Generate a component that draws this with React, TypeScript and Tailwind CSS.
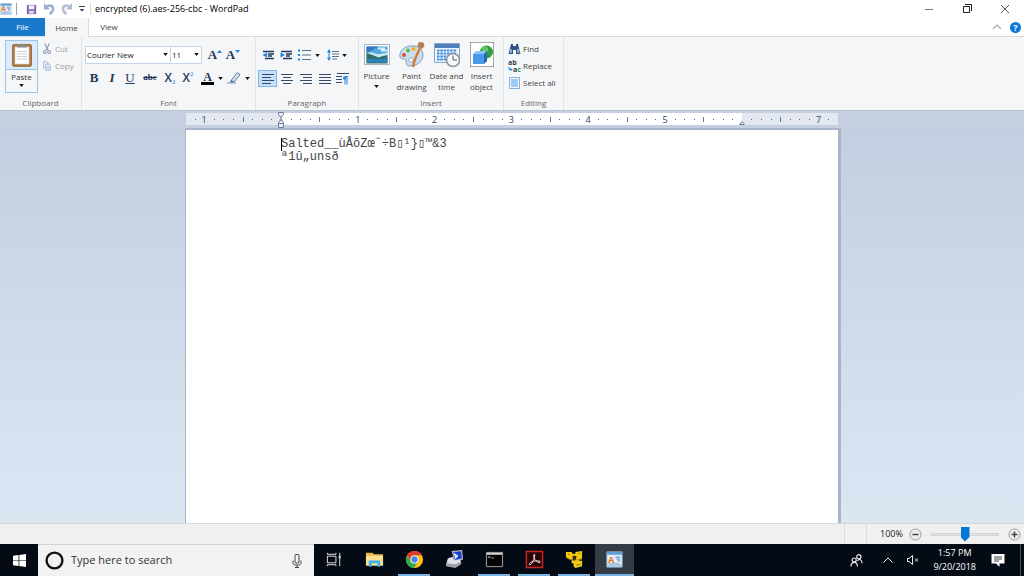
import React, { useState } from "react";
import clsx from "clsx";

const INCH = 76.8;
const PAGE_WIDTH = 652;
const MARGIN = 95;

const initialText = "Salted__ùÂõZœˆ÷B▯¹}▯™&3\nª1û„unsð";

const Caret = ({ className }: { className?: string }) => (
  <svg viewBox="0 0 6 4" className={clsx("h-[3px] w-[5px] shrink-0", className)}>
    <path d="M0 0h6L3 4z" fill="#111" />
  </svg>
);

/* ---------- Title bar ---------- */

const WordPadIcon = ({ className }: { className?: string }) => (
  <svg viewBox="0 0 18 18" className={className}>
    <path d="M1 1h16v16H1z" fill="#e4eff8" stroke="#a9c6de" />
    <path d="M1 1h16v3H1z" fill="#5d9fd6" />
    <path d="M1 14h16v3H1z" fill="#a9cbe6" />
    <text x="2" y="12.500" fontSize="10" fontWeight="700" fill="#e8762b">
      A
    </text>
    <path d="M10 6.500h5M11 8.500h4M12 10.500h3" stroke="#3f84c4" />
    <path d="M3 13.500h11" stroke="#7fa6c9" />
  </svg>
);

const TitleBar = () => (
  <header className="flex h-[18px] shrink-0 items-center bg-white">
    <WordPadIcon className="size-3" />
    <div className="ml-1 h-3 w-px bg-gray-400" />
    <div className="ml-[9px] flex items-center gap-[6px]">
      <button aria-label="Save">
        <svg viewBox="0 0 12 12" className="size-[11px]">
          <path d="M1.500 1.500h9v9h-9z" fill="#8a72bd" stroke="#6a529f" />
          <path d="M3 1.500h6v4H3z" fill="#f4f1fb" />
          <path d="M3.500 7.500h5v3h-5z" fill="#e4def2" />
        </svg>
      </button>
      <button aria-label="Undo">
        <svg viewBox="0 0 12 12" className="size-3">
          <path d="M3 4C6 1.500 10.500 2.500 10 6.500c-.3 2-1.500 3.500-3.500 4.500" fill="none" stroke="#9db1d0" strokeWidth="2.600" />
          <path d="M1 0v6.500h6z" fill="#9db1d0" />
        </svg>
      </button>
      <button aria-label="Redo">
        <svg viewBox="0 0 12 12" className="size-3">
          <path d="M9 4C6 1.500 1.500 2.500 2 6.500c.3 2 1.500 3.500 3.500 4.500" fill="none" stroke="#b4bfd0" strokeWidth="2.600" />
          <path d="M11 0v6.500H5z" fill="#b4bfd0" />
        </svg>
      </button>
      <button aria-label="Customize Quick Access Toolbar">
        <svg viewBox="0 0 6 6" className="size-[6px]">
          <path d="M0 .5h6" stroke="#444" />
          <path d="M.5 3h5L3 5.500z" fill="#444" />
        </svg>
      </button>
    </div>
    <div className="mr-1 ml-[5px] h-3 w-px bg-gray-300" />
    <h1 className="text-[9px] leading-3 text-black">encrypted (6).aes-256-cbc - WordPad</h1>
    <div className="ml-auto flex items-center gap-7 pr-[14px]">
      <button aria-label="Minimize">
        <svg viewBox="0 0 10 10" className="size-[10px]">
          <path d="M1 5.500h8" stroke="#777" />
        </svg>
      </button>
      <button aria-label="Restore">
        <svg viewBox="0 0 10 10" className="size-[10px]" fill="none" stroke="#222">
          <path d="M1.500 2.500h6v6h-6zM3 .5h6.500V7" />
        </svg>
      </button>
      <button aria-label="Close">
        <svg viewBox="0 0 10 10" className="size-[10px]">
          <path d="m1 1 8 8M9 1 1 9" stroke="#555" />
        </svg>
      </button>
    </div>
  </header>
);

const Tabs = () => (
  <nav className="flex h-[19px] shrink-0 items-stretch border-b border-[#d9dadc] bg-white text-[8px] text-[#444]">
    <button className="w-[45px] bg-[#1979ca] text-white">File</button>
    <button className="-mb-px w-11 border-r border-[#d9dadc] bg-[#f5f6f7]">Home</button>
    <button className="w-10">View</button>
    <div className="ml-auto flex items-center gap-2 pr-[3px]">
      <button aria-label="Minimize the Ribbon">
        <svg viewBox="0 0 10 6" className="h-[6px] w-[10px]">
          <path d="m1 5 4-4 4 4" fill="none" stroke="#aaa" strokeWidth="1.200" />
        </svg>
      </button>
      <button aria-label="Help" className="size-[11px] rounded-full bg-[#0c78d7] text-[9px] leading-[11px] font-bold text-white">
        ?
      </button>
    </div>
  </nav>
);

/* ---------- Ribbon ---------- */

const Group = ({ label, className, children }: { label: string; className: string; children: React.ReactNode }) => (
  <section className={clsx("flex shrink-0 flex-col border-r border-[#e2e3e5]", className)}>
    <div className="h-[59px]">{children}</div>
    <h2 className="text-center text-[8px] leading-[14px] text-[#666]">{label}</h2>
  </section>
);

const Clipboard = () => (
  <Group label="Clipboard" className="w-[82px]">
    <div className="flex gap-[5px] pt-[3px] pl-[5px]">
      <button className="flex h-[53px] w-[33px] flex-col items-center border border-[#9cc5ea] text-[8px] text-[#333]">
        <span className="flex h-[29px] w-full items-center justify-center border-b border-[#9cc5ea] bg-[#dbebfa]">
          <svg viewBox="0 0 20 24" className="h-6 w-5">
            <rect x=".7" y="1.700" width="18.600" height="21.500" rx="1" fill="#b98147" stroke="#8b5a2b" />
            <path d="M3 4h14v17H3z" fill="#fff" stroke="#c8ccd0" strokeWidth=".6" />
            <path d="M5 4.500h10V2.500h-3a2 2 0 0 0-4 0H5z" fill="#8a8f93" />
            <path d="M5 8.500h10M5 11h10M5 13.500h10M5 16h10" stroke="#b9c4d0" strokeWidth=".8" />
          </svg>
        </span>
        <span className="leading-[13px]">Paste</span>
        <Caret className="mt-px" />
      </button>
      <div className="flex flex-col text-[8px] text-[#999]">
        <button className="flex h-[17px] items-center gap-1">
          <svg viewBox="0 0 10 14" className="h-3 w-2" fill="none" stroke="#8f9fb8">
            <path d="M2 0 6.500 9M8 0 3.500 9" strokeWidth="1.500" />
            <circle cx="2.300" cy="11" r="1.700" strokeWidth="1.300" />
            <circle cx="7.700" cy="11" r="1.700" strokeWidth="1.300" />
          </svg>
          Cut
        </button>
        <button className="flex h-[18px] items-center gap-1">
          <svg viewBox="0 0 10 12" className="h-3 w-2" fill="#e5edf7" stroke="#9cb3d2">
            <path d="M.5.5h4l2 2v6h-6z" />
            <path d="M3.500 3.500h4l2 2v6h-6z" />
            <path d="M5 7h3M5 9h3" />
          </svg>
          Copy
        </button>
      </div>
    </div>
  </Group>
);

const fontButtons = "flex h-4 items-center justify-center font-['Liberation_Serif'] text-[13px] leading-4 text-[#1e395b]";

const scriptButtons = "flex h-4 w-[18px] items-center justify-center font-['Open_Sans'] text-[12px] leading-4 text-[#1e395b]";

const FontGroup = () => (
  <Group label="Font" className="w-[174px]">
    <div className="flex items-center pt-[9px] pl-[3px]">
      <div className="relative">
        <select
          aria-label="Font family"
          className="block h-[18px] w-[86px] appearance-none border border-[#c5d3e6] bg-white pl-px text-[8px] text-[#222]"
        >
          <option>Courier New</option>
          <option>Arial</option>
          <option>Calibri</option>
        </select>
        <Caret className="pointer-events-none absolute top-[7px] right-[3px]" />
      </div>
      <div className="relative -ml-px">
        <select
          aria-label="Font size"
          className="block h-[18px] w-8 appearance-none border border-[#c5d3e6] bg-white pl-px text-[8px] text-[#222]"
        >
          <option>11</option>
          <option>12</option>
          <option>14</option>
        </select>
        <Caret className="pointer-events-none absolute top-[7px] right-[3px]" />
      </div>
      <button aria-label="Grow font" className={clsx(fontButtons, "ml-1 w-[18px] font-bold")}>
        A
        <svg viewBox="0 0 5 3" className="mb-2 h-[3px] w-[5px]">
          <path d="M0 3h5L2.500 0z" fill="#1b84e0" />
        </svg>
      </button>
      <button aria-label="Shrink font" className={clsx(fontButtons, "w-[18px] font-bold")}>
        A
        <svg viewBox="0 0 5 3" className="mb-2 h-[3px] w-[5px]">
          <path d="M0 0h5L2.500 3z" fill="#1b84e0" />
        </svg>
      </button>
    </div>
    <div className="flex items-center pt-[6px] pl-[3px]">
      <button aria-label="Bold" className={clsx(fontButtons, "w-[18px] font-bold")}>
        B
      </button>
      <button aria-label="Italic" className={clsx(fontButtons, "w-[18px] font-bold italic")}>
        I
      </button>
      <button aria-label="Underline" className={clsx(fontButtons, "w-[18px] underline")}>
        U
      </button>
      <button aria-label="Strikethrough" className="flex h-4 w-[22px] items-center justify-center font-['Liberation_Serif'] text-[9px] font-bold text-[#1e395b] line-through">
        abc
      </button>
      <button aria-label="Subscript" className={scriptButtons}>
        <span className="font-semibold">X</span>
        <span className="mt-2 text-[6px] text-[#1b84e0]">2</span>
      </button>
      <button aria-label="Superscript" className={scriptButtons}>
        <span className="font-semibold">X</span>
        <span className="mb-2 text-[6px] text-[#1b84e0]">2</span>
      </button>
      <button aria-label="Text color" className="ml-1 flex items-center gap-1">
        <span className="h-[13px] w-[13px] border-b-3 border-black text-center font-['Liberation_Serif'] text-[12px] leading-[11px] font-bold text-[#1e395b]">
          A
        </span>
        <Caret />
      </button>
      <button aria-label="Text highlight color" className="ml-1 flex items-center gap-1">
        <svg viewBox="0 0 14 12" className="h-3 w-[14px]">
          <path d="M4 8.500 10.500.7 13 2.700 7 10z" fill="#d5e3f3" stroke="#5f7a9e" />
          <path d="M4 8.500 2.500 11 7 10z" fill="#385d8a" />
          <path d="M0 11h9" stroke="#9fb0c6" strokeWidth="1.500" />
        </svg>
        <Caret />
      </button>
    </div>
  </Group>
);

const alignments = [
  { label: "Align left", path: "M0 .5h12M0 3.500h9M0 6.500h12M0 9.500h9" },
  { label: "Center", path: "M0 .5h12M2 3.500h8M0 6.500h12M2 9.500h8" },
  { label: "Align right", path: "M0 .5h12M3 3.500h9M0 6.500h12M3 9.500h9" },
  { label: "Justify", path: "M0 .5h12M0 3.500h12M0 6.500h12M0 9.500h12" },
];

const Paragraph = () => {
  const [align, setAlign] = useState("Align left");

  return (
    <Group label="Paragraph" className="w-[103px]">
      <div className="flex h-8 items-center gap-[6px] pt-1 pl-[6px]">
        <button aria-label="Decrease indent">
          <svg viewBox="0 0 12 10" className="h-[10px] w-3">
            <path d="M1 1.500h11M6 4h6M6 6h4M3 8.500h9" stroke="#1e395b" strokeWidth="1.400" />
            <path d="M5 2.500v5L.5 5z" fill="#1b84e0" />
          </svg>
        </button>
        <button aria-label="Increase indent">
          <svg viewBox="0 0 12 10" className="h-[10px] w-3">
            <path d="M1 1.500h11M6 4h6M6 6h4M3 8.500h9" stroke="#1e395b" strokeWidth="1.400" />
            <path d="M.5 2.500v5L5 5z" fill="#1b84e0" />
          </svg>
        </button>
        <button aria-label="Start a list" className="flex items-center gap-1">
          <svg viewBox="0 0 13 12" className="h-3 w-[13px]">
            <path d="M4 1.500h9M4 6h9M4 10.500h9" stroke="#5b728f" />
            <path d="M0 1.500h2M0 6h2M0 10.500h2" stroke="#1b84e0" strokeWidth="2" />
          </svg>
          <Caret />
        </button>
        <button aria-label="Line spacing" className="ml-px flex items-center gap-[2px]">
          <svg viewBox="0 0 13 12" className="h-3 w-[13px]">
            <path d="M5 2.500h7M5 5h7M5 7.500h7M5 10h5" stroke="#5b728f" />
            <path d="M2 2v8" stroke="#1b84e0" />
            <path d="M0 3.500h4L2 0zM0 8.500h4L2 12z" fill="#1b84e0" />
          </svg>
          <Caret />
        </button>
      </div>
      <div className="flex pt-px pl-[2px]">
        {alignments.map((item) => (
          <button
            key={item.label}
            aria-label={item.label}
            onClick={() => setAlign(item.label)}
            className={clsx(
              "flex h-[17px] w-[19px] items-center justify-center border",
              align === item.label ? "border-[#7db4ea] bg-[#c8e0f7]" : "border-transparent"
            )}
          >
            <svg viewBox="0 0 12 10" className="h-[10px] w-3">
              <path d={item.path} stroke="#364b69" />
            </svg>
          </button>
        ))}
        <button aria-label="Paragraph" className="flex h-[17px] w-[17px] items-center justify-center">
          <svg viewBox="0 0 13 12" className="h-3 w-[13px]">
            <path d="M1 .5h12M0 3.500h6M0 6.500h6M0 9.500h6" stroke="#364b69" />
            <path d="M9 3.500v8M11 3.500v8M12 3.500H9" stroke="#1b84e0" />
            <circle cx="8.500" cy="5" r="1.600" fill="#1b84e0" />
          </svg>
        </button>
      </div>
    </Group>
  );
};

const insertButton = "flex w-[35px] shrink-0 flex-col items-center text-center text-[8px] leading-[11px] text-[#444]";

const Insert = () => (
  <Group label="Insert" className="w-[145px]">
    <div className="flex pt-1">
      <button className={insertButton}>
        <svg viewBox="0 0 26 28" className="mb-px h-7 w-[26px]">
          <path d="M.5 3.500h25v20H.5z" fill="#fff" stroke="#a9b3bd" />
          <path d="M2.500 5.500h21v8h-21z" fill="#56a6df" />
          <path d="M2.500 5.500h12l-12 7z" fill="#3378c0" />
          <path d="M14 6.500h7v2h2v2H17v-2h-3z" fill="#d6edfb" />
          <path d="M2.500 12c4-2 8 0 11 1.500l10-2v6h-21z" fill="#c4e6f0" />
          <path d="M2.500 12c4 1 8 3 12 4.500 4-1.500 6-2 9-2.500v8.500h-21z" fill="#2f6d68" />
          <path d="M2.500 18c7-2 14 2 21-1.500v5h-21z" fill="#2c82ba" />
        </svg>
        Picture
        <Caret className="mt-1" />
      </button>
      <button className={insertButton}>
        <svg viewBox="0 0 26 28" className="mb-px h-7 w-[26px]">
          <path d="M11 5C4 6 0 11 1 16c1 3 5 1 6 3 1 3-1 6 4 6 7 0 13-5 13-11S18 4 11 5z" fill="#c9dff1" stroke="#7f9dbd" />
          <circle cx="5" cy="14" r="2" fill="#e14b3b" />
          <circle cx="9" cy="9.500" r="2" fill="#63b647" />
          <circle cx="14.500" cy="8" r="2" fill="#f3b41b" />
          <circle cx="12" cy="19" r="2.200" fill="#fff" stroke="#8aa9c9" />
          <path d="M14 26C15 20 18 13 21 7" stroke="#d9792b" strokeWidth="2.400" fill="none" />
          <path d="m18 5 5 3 2.500-3-1-3.500L20 1z" fill="#b77d4c" />
        </svg>
        Paint drawing
      </button>
      <button className={insertButton}>
        <svg viewBox="0 0 26 28" className="mb-px h-7 w-[26px]">
          <path d="M.5 2.500h25v19H.5z" fill="#f0f6fc" stroke="#8ca5c2" />
          <path d="M1 3h24v4H1z" fill="#4d7fb9" />
          <path d="M3 9.500h20M3 12.500h20M3 15.500h13M3 18.500h11" stroke="#3f8de0" strokeWidth="2" strokeDasharray="2.500 .8" />
          <circle cx="19" cy="19" r="6.500" fill="#f7f8f9" stroke="#8d959e" strokeWidth="1.500" />
          <path d="M19 14.500V19h4" stroke="#4c5966" fill="none" />
        </svg>
        Date and time
      </button>
      <button className={insertButton}>
        <svg viewBox="0 0 26 28" className="mb-px h-7 w-[26px]">
          <path d="M1.500 1.500h23v24h-23z" fill="#fff" stroke="#a6a6a6" />
          <circle cx="17.500" cy="11" r="6.500" fill="#2f9e3c" />
          <circle cx="16" cy="8.500" r="3" fill="#66c564" />
          <path d="M4 13h11v10H4z" fill="#4a9aec" />
          <path d="m4 13 3-3h11l-3 3z" fill="#8cc3f8" />
          <path d="m15 13 3-3v10l-3 3z" fill="#2867b4" />
          <path d="M1 1h1v1H1zM24 1h1v1h-1zM1 25h1v1H1zM24 25h1v1h-1z" fill="#777" />
        </svg>
        Insert object
      </button>
    </div>
  </Group>
);

const Editing = () => (
  <Group label="Editing" className="w-[60px]">
    <div className="flex flex-col pt-[3px] pl-1 text-[8px] text-[#444]">
      <button className="flex h-[17px] items-center gap-[2px]">
        <svg viewBox="0 0 13 12" className="h-3 w-[13px]">
          <path d="M3 1h2v2h3V1h2l2.500 10H8V7H5v4H.5z" fill="#2f5488" />
          <path d="M2 6h2v4H1.500zM9 6h2l.5 4H9z" fill="#84a6d2" />
        </svg>
        Find
      </button>
      <button aria-label="Replace" className="flex h-[17px] items-center gap-[2px]">
        <svg viewBox="0 0 13 14" className="h-[14px] w-[13px]" fontSize="7" fontWeight="700">
          <text x="0" y="6" fill="#2b3f5c">
            ab
          </text>
          <text x="5" y="13" fill="#2b3f5c">
            a<tspan fill="#2c9a3c">c</tspan>
          </text>
          <path d="M1 8v2.500h2.500M2.500 9 4 10.500 2.500 12" fill="none" stroke="#1b84e0" />
        </svg>
        Replace
      </button>
      <button className="flex h-[17px] items-center gap-[2px] whitespace-nowrap">
        <svg viewBox="0 0 13 12" className="h-3 w-[13px]">
          <path d="M1.500.5h10v11h-10z" fill="none" stroke="#1b6fc0" strokeDasharray="1 1" />
          <path d="M3 2h7v8H3z" fill="#9fccf3" />
        </svg>
        Select all
      </button>
    </div>
  </Group>
);

/* ---------- Document ---------- */

const Ruler = () => {
  const ticks = Array.from({ length: 68 }, (_, i) => i - 9).filter((i) => i % 8 !== 0);

  return (
    <div className="shrink-0 border-t border-[#b8c4d6] bg-[#c5cfdf] pt-[2px] pb-1">
      <svg width={PAGE_WIDTH} height="13" className="mx-auto block overflow-visible" shapeRendering="crispEdges">
        <rect width={PAGE_WIDTH} height="12" fill="#e3e7ef" />
        <rect x={MARGIN} width={INCH * 6} height="12" fill="#fff" />
        {ticks.map((i) => {
          const x = Math.round(MARGIN + (i * INCH) / 8);
          const half = i % 4 === 0;
          return x > 2 && x < PAGE_WIDTH - 4 ? (
            <rect key={i} x={x} y={half ? 4 : 6} width="1" height={half ? 5 : 1} fill={half ? "#62748f" : "#4d5f7c"} />
          ) : null;
        })}
        {[-1, 1, 2, 3, 4, 5, 7].map((n) => (
          <text key={n} x={MARGIN + n * INCH} y="10" textAnchor="middle" fontSize="9" fill="#2c456b">
            {Math.abs(n)}
          </text>
        ))}
        <g fill="#e7ecf4" stroke="#6b7f9c" shapeRendering="auto">
          <path d="M92.500-.5h5v2l-2.500 3-2.500-3zM92.500 9.500l2.500-3 2.500 3v5h-5z" />
          <path d="M95 4v4M92.500 10.500h5" />
          <path d="M553.500 11.500 556 8.500l2.500 3z" />
        </g>
      </svg>
    </div>
  );
};

const Document = () => (
  <main className="flex min-h-0 flex-1 bg-linear-to-b from-[#c4cee0] to-[#dce6f3]">
    <div className="relative mx-auto flex w-[652px] shadow-[1px_0_0_2px_#a9b6ca]">
      <textarea
        aria-label="Document"
        spellCheck={false}
        defaultValue={initialText}
        className="block w-full resize-none bg-white pt-2 pr-24 pl-[95px] font-['Liberation_Mono','DejaVu_Sans_Mono',monospace] text-[12px] leading-[13px] text-[#444] outline-none"
      />
      <span className="pointer-events-none absolute top-2 left-[95px] h-[13px] w-px bg-black" />
    </div>
  </main>
);

const StatusBar = () => {
  const [zoom, setZoom] = useState(100);

  return (
    <footer className="relative flex h-[21px] shrink-0 items-center justify-end border-t border-[#d5d7da] bg-[#f0f0f0]">
      <div className="h-full w-[23px] border-x border-[#dcdcdc]" />
      <label htmlFor="zoom" className="ml-[13px] w-[29px] text-[9px] text-[#222]">
        {zoom}%
      </label>
      <button aria-label="Zoom out" onClick={() => setZoom(Math.max(10, zoom - 10))}>
        <svg viewBox="0 0 13 13" className="size-[13px]">
          <circle cx="6.500" cy="6.500" r="5.500" fill="#eee" stroke="#999" />
          <path d="M3.500 6.500h6" stroke="#444" strokeWidth="1.500" />
        </svg>
      </button>
      <input
        id="zoom"
        type="range"
        min={0}
        max={200}
        value={zoom}
        onChange={(e) => setZoom(Number(e.target.value))}
        className="mx-[9px] h-4 w-[68px] appearance-none bg-transparent [&::-webkit-slider-runnable-track]:h-[3px] [&::-webkit-slider-runnable-track]:border [&::-webkit-slider-runnable-track]:border-[#d4d4d4] [&::-webkit-slider-runnable-track]:bg-[#e4e4e4] [&::-webkit-slider-thumb]:-mt-[7px] [&::-webkit-slider-thumb]:h-[15px] [&::-webkit-slider-thumb]:w-[9px] [&::-webkit-slider-thumb]:appearance-none [&::-webkit-slider-thumb]:bg-[#0078d7] [&::-webkit-slider-thumb]:[clip-path:polygon(0_0,100%_0,100%_70%,50%_100%,0_70%)]"
      />
      <button aria-label="Zoom in" className="mr-[3px]" onClick={() => setZoom(Math.min(200, zoom + 10))}>
        <svg viewBox="0 0 13 13" className="size-[13px]">
          <circle cx="6.500" cy="6.500" r="5.500" fill="#eee" stroke="#999" />
          <path d="M3.500 6.500h6M6.500 3.500v6" stroke="#444" strokeWidth="1.500" />
        </svg>
      </button>
    </footer>
  );
};

/* ---------- Taskbar ---------- */

const apps = [
  {
    name: "Task View",
    running: false,
    icon: (
      <g fill="none" stroke="#e8e8e8">
        <path d="M2.500 6.500h9v7h-9zM2.500 3v1.500h9V3M2.500 17v-1.500h9V17M15.500 3v3M15.500 9v8" />
        <path d="M15.500 6v3" strokeWidth="2" />
      </g>
    ),
  },
  {
    name: "File Explorer",
    running: false,
    icon: (
      <>
        <path d="M1 3h7l1.500 1.500H19V16H1z" fill="#e9b84a" />
        <path d="M1 6h18v10.500H1z" fill="#fbe093" />
        <path d="M4 17.500V11h12v6.500h-3V14H7v3.500z" fill="#3fb1e8" />
      </>
    ),
  },
  {
    name: "Chrome",
    running: true,
    icon: (
      <>
        <circle cx="10" cy="10" r="9" fill="#fbc116" />
        <path d="M2.200 5.500A9 9 0 0 1 17.800 5.500H10a4.500 4.500 0 0 0-4 6.500z" fill="#e33b2e" />
        <path d="M2.200 5.500A9 9 0 0 0 9.500 19l4-6.800A4.500 4.500 0 0 1 6 12z" fill="#2da94f" />
        <circle cx="10" cy="10" r="4.200" fill="#fff" />
        <circle cx="10" cy="10" r="3.300" fill="#4285f4" />
      </>
    ),
  },
  {
    name: "PuTTY",
    running: false,
    icon: (
      <>
        <path d="m7 1 11-1 1 10-9 2z" fill="#b8c1cf" />
        <path d="m8.500 2 8.500-.8.7 7.800-7.200 1.500z" fill="#1c3fd0" />
        <path d="m9 2.500 5 3.500-3 4z" fill="#dfe8fb" />
        <path d="m3 9 5-2 2 4 6-1 1 3-6 4-10-1z" fill="#dfe2e6" />
        <path d="m1 14 10 1 6-3v3l-6 4-10-2z" fill="#9ba2ab" />
      </>
    ),
  },
  {
    name: "Command Prompt",
    running: true,
    icon: (
      <>
        <path d="M1.500 2.500h17v15h-17z" fill="#050505" stroke="#a8a8a8" />
        <path d="M2 3h16v2H2z" fill="#d8d8d8" />
        <path d="M3 7.500h3M7 8.500h2" stroke="#ddd" />
      </>
    ),
  },
  {
    name: "Acrobat Reader",
    running: true,
    icon: (
      <>
        <path d="M1.500 1.500h17v17h-17z" fill="#2a0506" stroke="#c8281f" strokeWidth="1.500" />
        <path
          d="M10 4.500c-1.500 0-1 3 .5 5.500s4.500 4 5.500 3-1.500-2-5-1.500-6.500 2-6.500 3.500 2 .5 3.500-2.500 3-8 2-8z"
          fill="none"
          stroke="#f5e7e7"
        />
      </>
    ),
  },
  {
    name: "Network Tool",
    running: true,
    icon: (
      <>
        <path d="M1 2h6l1 2h3V2l7-1v8l-3 .5v2l3-.5v6l-7 2-2-2v-3H7v-4H5L1 7z" fill="#f4cb17" />
        <path d="M8 6h4v2l-1 3H8z" fill="#3a3006" />
        <path d="m3 4 2 1M14 4l2-.5M12 16l4-1" fill="none" stroke="#8a6d06" />
        <path d="M1 7.500 5 10M18 9.500l-6 1" fill="none" stroke="#b58c0a" />
      </>
    ),
  },
];

const Taskbar = () => (
  <div className="flex h-8 shrink-0 items-stretch bg-[#040b14] text-white">
    <button aria-label="Start" className="flex w-[38px] items-center justify-center">
      <svg viewBox="0 0 14 14" className="size-[13px]">
        <path d="M0 2 6 1.200v5.400H0zM6.800 1.100 14 0v6.600H6.800zM0 7.400h6v5.400L0 12zM6.800 7.400H14V14l-7.200-1.100z" fill="#fff" />
      </svg>
    </button>
    <div className="flex w-[276px] items-center border-t border-[#d0d2d0] bg-[#f2f2f2] pr-3 pl-[7px]">
      <svg viewBox="0 0 18 18" className="size-[19px] shrink-0">
        <circle cx="9" cy="9" r="7.500" fill="none" stroke="#111" strokeWidth="2.200" />
      </svg>
      <input
        type="text"
        aria-label="Search"
        placeholder="Type here to search"
        className="ml-[7px] min-w-0 flex-1 bg-transparent text-[11px] text-[#333] outline-none placeholder:text-[#333]"
      />
      <button aria-label="Voice search">
        <svg viewBox="0 0 10 14" className="h-[14px] w-[10px]" fill="none" stroke="#444">
          <rect x="3" y=".5" width="4" height="8.500" rx="1" />
          <path d="M1 6.500v3L2.500 11h5L9 9.500v-3M5 11v2.500M3 13.500h4" />
        </svg>
      </button>
    </div>
    {apps.map((app) => (
      <button key={app.name} aria-label={app.name} className="flex w-10 shrink-0 flex-col items-center px-1">
        <span className="flex flex-1 items-center">
          <svg viewBox="0 0 20 20" className="size-[19px]">
            {app.icon}
          </svg>
        </span>
        <span className={clsx("h-[2px] w-full", app.running && "bg-[#76b2e4]")} />
      </button>
    ))}
    <button aria-label="WordPad" className="ml-px flex w-[39px] shrink-0 flex-col items-center bg-[#343c46]">
      <span className="flex flex-1 items-center">
        <WordPadIcon className="size-[17px]" />
      </span>
      <span className="h-[2px] w-full bg-[#76b2e4]" />
    </button>
    <div className="ml-auto flex items-center">
      <button aria-label="People">
        <svg viewBox="0 0 14 14" className="size-[13px]" fill="none" stroke="#eee" strokeWidth="1.200">
          <circle cx="9.500" cy="3" r="2.300" />
          <circle cx="4.500" cy="6.500" r="2.200" />
          <path d="M1 13.500c0-6 7-6 7 0M8 7.500c2-3 5-1.500 5 2.500" />
        </svg>
      </button>
      <button aria-label="Show hidden icons" className="ml-5">
        <svg viewBox="0 0 10 6" className="h-[6px] w-[10px]">
          <path d="m.5 5.500 4.500-4.500 4.500 4.500" fill="none" stroke="#eee" />
        </svg>
      </button>
      <button aria-label="Volume muted" className="ml-[14px]">
        <svg viewBox="0 0 12 10" className="h-[10px] w-3" fill="none" stroke="#eee">
          <path d="M.5 3.500H2L5.500.5v9L2 6.500H.5zM8 3.500l3 3M11 3.500l-3 3" />
        </svg>
      </button>
      <time className="ml-[14px] flex flex-col text-center text-[9px] leading-[14px]">
        <span>1:57 PM</span>
        <span>9/20/2018</span>
      </time>
      <button aria-label="Notifications" className="ml-[15px]">
        <svg viewBox="0 0 14 14" className="size-[14px]">
          <path d="M.5 1h13v9.500H8.500V14L5 10.500H.5z" fill="#fff" />
          <path d="M3 4h8M3 6h8M3 8h5" stroke="#111" strokeWidth=".8" />
        </svg>
      </button>
      <div className="mr-[3px] ml-[15px] h-8 w-px bg-[#4b525a]" />
    </div>
  </div>
);

export default function App() {
  return (
    <div className="flex h-screen flex-col overflow-hidden font-['Open_Sans',sans-serif]">
      <TitleBar />
      <Tabs />
      <div className="flex h-[73px] shrink-0 bg-[#f5f6f7]">
        <Clipboard />
        <FontGroup />
        <Paragraph />
        <Insert />
        <Editing />
      </div>
      <Ruler />
      <Document />
      <StatusBar />
      <Taskbar />
    </div>
  );
}
